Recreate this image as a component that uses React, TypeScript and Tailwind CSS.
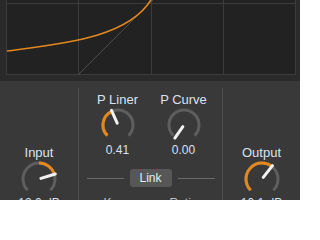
type KnobProps = {
  r: number;
  from: number;
  to: number;
  pointer: number;
};

function pt(c: number, rad: number, deg: number) {
  const a = (deg * Math.PI) / 180;
  return [c + rad * Math.sin(a), c - rad * Math.cos(a)];
}

function arc(c: number, r: number, a0: number, a1: number) {
  const [x0, y0] = pt(c, r, a0);
  const [x1, y1] = pt(c, r, a1);
  const large = a1 - a0 > 180 ? 1 : 0;
  return `M ${x0} ${y0} A ${r} ${r} 0 ${large} 1 ${x1} ${y1}`;
}

function Knob({ r, from, to, pointer }: KnobProps) {
  const size = (r + 2) * 2;
  const c = r + 2;
  const [px0, py0] = pt(c, 2, pointer);
  const [px1, py1] = pt(c, r + 1, pointer);
  return (
    <svg width={size} height={size} viewBox={`0 0 ${size} ${size}`} className="block shrink-0">
      <path d={arc(c, r, -135, 135)} fill="none" stroke="#5e5e5e" strokeWidth={3} />
      {to > from && <path d={arc(c, r, from, to)} fill="none" stroke="#e3871f" strokeWidth={3} />}
      <line x1={px0} y1={py0} x2={px1} y2={py1} stroke="#f2f2f2" strokeWidth={3} strokeLinecap="round" />
    </svg>
  );
}

function Graph() {
  return (
    <svg width={290} height={75} viewBox="6 0 290 75" className="block ml-[6px]">
      <rect x={6} y={-80} width={290} height={155} fill="#222222" />
      {[6.5, 78.5, 151.5, 223.5, 295.5].map((x) => (
        <line key={x} x1={x} y1={-80} x2={x} y2={75} stroke="#3c3c3c" strokeWidth={1} />
      ))}
      {[3.5, 74.5].map((y) => (
        <line key={y} x1={6} y1={y} x2={296} y2={y} stroke="#3c3c3c" strokeWidth={1} />
      ))}
      <line x1={78.5} y1={74.5} x2={153} y2={0} stroke="#555555" strokeWidth={0.8} />
      <path d="M 7 51 C 60 44, 130 38, 152 -2" fill="none" stroke="#e3871f" strokeWidth={1.6} />
    </svg>
  );
}

export default function App() {
  return (
    <div className="w-[300px] h-[200px] overflow-hidden bg-[#393939] font-['Liberation_Sans',Arial,sans-serif] text-[#d8e3ee]">
      <div className="h-[81px] bg-[#2a2a2a] overflow-hidden">
        <Graph />
      </div>
      <div className="flex h-[119px] overflow-hidden">
        <div className="w-[79px] mt-[7px] border-r border-[#4d4d4d] flex flex-col items-center pt-[57px]">
          <span className="shrink-0 text-[13px] leading-[16px]">Input</span>
          <Knob r={16} from={0} to={73} pointer={73} />
          <span className="shrink-0 text-[12px] leading-[16px] -mt-[2px]">12.0 dB</span>
        </div>
        <div className="w-[144px] mt-[7px] border-r border-[#4d4d4d] flex flex-col">
          <div className="shrink-0 flex justify-center pt-[4px]">
            <div className="w-[66px] flex flex-col items-center">
              <span className="text-[13px] leading-[16px]">P Liner</span>
              <Knob r={15} from={-135} to={-24} pointer={-24} />
              <span className="text-[12px] leading-[16px]">0.41</span>
            </div>
            <div className="w-[66px] flex flex-col items-center">
              <span className="text-[13px] leading-[16px]">P Curve</span>
              <Knob r={15} from={-135} to={-135} pointer={-145} />
              <span className="text-[12px] leading-[16px]">0.00</span>
            </div>
          </div>
          <div className="shrink-0 flex items-center justify-center gap-[6px] mt-[11px]">
            <div className="w-[37px] h-px bg-[#6a6a6a]" />
            <div className="w-[42px] h-[18px] rounded-[3px] bg-[#575757] flex items-center justify-center text-[12px] text-[#e4ebf2]">
              Link
            </div>
            <div className="w-[37px] h-px bg-[#6a6a6a]" />
          </div>
          <div className="shrink-0 flex justify-center mt-[8px] text-[12px] leading-[16px] text-[#b9c3cc]">
            <span className="w-[66px] text-center">Knee</span>
            <span className="w-[66px] text-center">Ratio</span>
          </div>
        </div>
        <div className="flex-1 mt-[7px] flex flex-col items-center pt-[57px]">
          <span className="shrink-0 text-[13px] leading-[16px]">Output</span>
          <Knob r={16} from={-135} to={38} pointer={38} />
          <span className="shrink-0 text-[12px] leading-[16px] -mt-[2px]">10.1 dB</span>
        </div>
      </div>
    </div>
  );
}
